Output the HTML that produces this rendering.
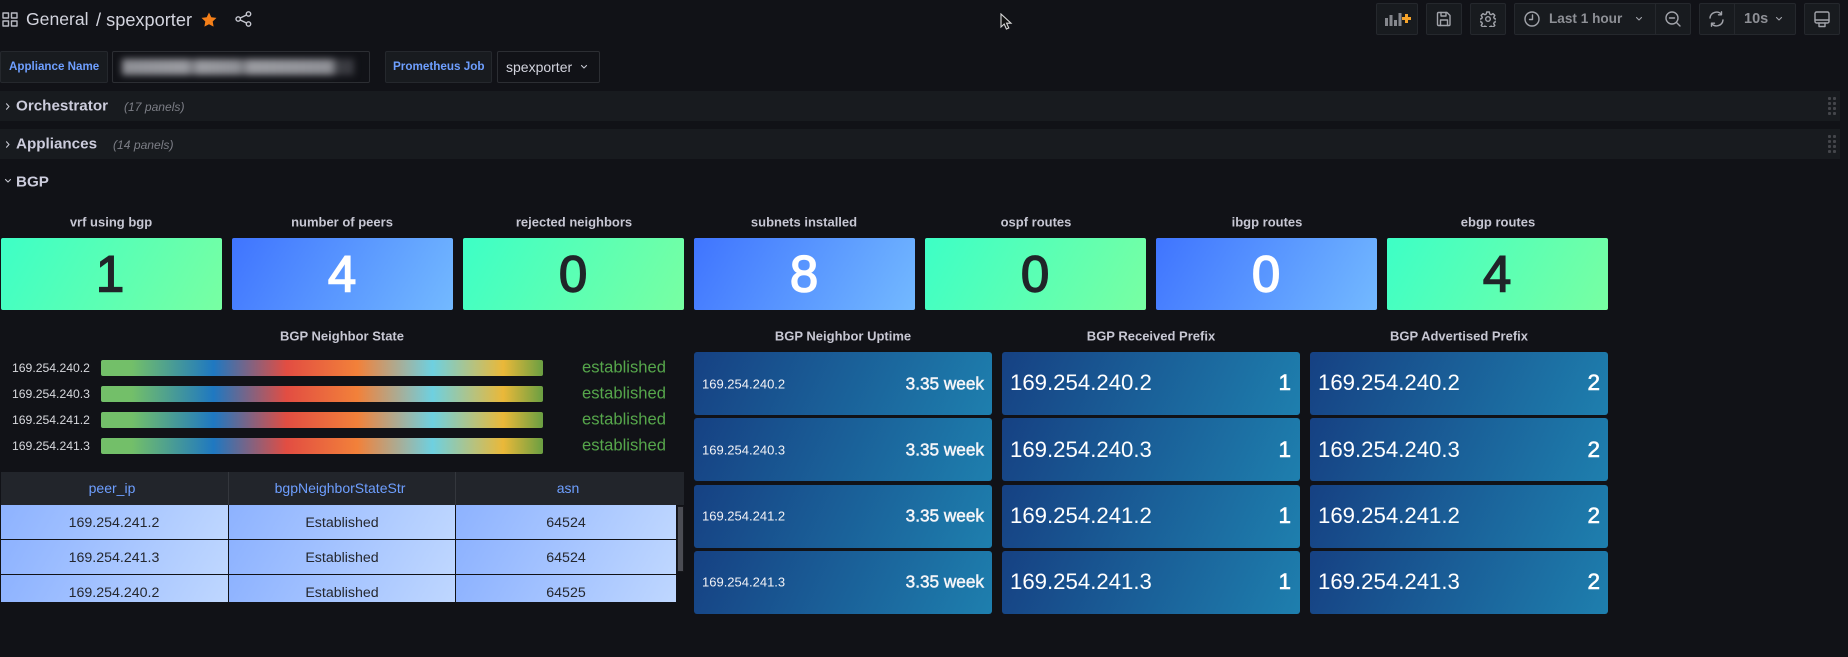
<!DOCTYPE html>
<html lang="en"><head><meta charset="utf-8"><title>spexporter</title>
<style>
html,body{margin:0;padding:0;background:#111217;}
#p{position:relative;width:1848px;height:657px;overflow:hidden;background:#111217;font-family:"Liberation Sans",sans-serif;color:#ccccdc;filter:blur(.35px);}
#p div,#p svg,#p span.a{position:absolute;}
.t{white-space:nowrap;line-height:1;transform:translateY(-50%);}
.c{white-space:nowrap;line-height:1;transform:translate(-50%,-50%);}
.btn{background:#181b1f;border:1px solid #25282d;border-radius:2px;box-sizing:border-box;top:3px;height:32px;}
.row{left:0;width:1840px;height:30px;background:#181b1f;}
.rt{font-size:15.2px;font-weight:700;color:#ccccdc;}
.pn{font-size:12.1px;font-style:italic;color:#7c7e86;}
.dots{width:9px;height:19px;left:1827px;background:radial-gradient(circle,#44464b 1.6px,transparent 1.7px) 0 0/5px 5px;}
.st{top:238px;width:221px;height:72px;border-radius:2px;}
.g{background:linear-gradient(120deg,#3dffc6,#78ffa2);}
.b{background:linear-gradient(120deg,#3f74ff,#73b9ff);}
.n{font-size:51px;font-weight:400;top:274px;-webkit-text-stroke:1.5px currentColor;}
.dk{color:#202429;}.wh{color:#fff;}
.ti{font-size:13px;font-weight:700;color:#c7c7d3;}
.bar{left:101px;width:442px;height:16px;border-radius:2px;background:linear-gradient(90deg,#73bf69 0,#73bf69 7%,#1f78c1 25.5%,#e24d42 42%,#f2813a 58%,#6ed0e0 75%,#eab839 91%,#6a9f42 100%);}
.bl{left:12px;font-size:12.2px;color:#d8d9de;}
.es{left:582px;font-size:16.6px;color:#56a64b;}
.th{top:472px;height:33px;background:#22252b;}
.tl{font-size:14px;color:#6e9fff;top:488px;}
.cl{height:34px;background:linear-gradient(120deg,#8db2ff,#bfd7ff);}
.td{font-size:14.2px;color:#24272e;}
.tile{width:298px;height:63px;border-radius:3px;background:linear-gradient(115deg,#164183,#1e7fae);}
.ul{font-size:13px;color:#f2f2f6;}
.uv{font-size:17.2px;font-weight:400;color:#f5f5f8;-webkit-text-stroke:.5px currentColor;}
.pl{font-size:22.2px;color:#fff;}
.pv{font-size:22.5px;font-weight:400;color:#fff;-webkit-text-stroke:.6px currentColor;}
.ico{fill:none;stroke:#a2a4ab;stroke-width:1.4;stroke-linecap:round;stroke-linejoin:round;}
.bt{font-size:13.6px;font-weight:700;color:#8e9096;}
</style></head><body><div id="p">

<svg class="ico" style="left:2px;top:12px;stroke:#b9bac3" width="16" height="15" viewBox="0 0 16 15"><rect x="1" y="1" width="5.5" height="5"/><rect x="9.5" y="1" width="5.5" height="5"/><rect x="1" y="9" width="5.5" height="5"/><rect x="9.5" y="9" width="5.5" height="5"/></svg>
<div class="t" style="left:26px;top:20px;font-size:17.6px;color:#d3d4de">General</div>
<div class="t" style="left:96px;top:20px;font-size:18.2px;color:#d3d4de">/ spexporter</div>
<svg style="left:201px;top:12px" width="16" height="15" viewBox="0 0 16 15"><path fill="#f47f19" d="M8 .5l2.3 4.7 5.2.7-3.8 3.6.9 5.1L8 12.2l-4.6 2.4.9-5.1L.5 5.9l5.2-.7z"/></svg>
<svg class="ico" style="left:235px;top:11px;stroke:#c6c7d0" width="17" height="16" viewBox="0 0 17 16"><circle cx="3.2" cy="8" r="2.2"/><circle cx="13.5" cy="3" r="2.2"/><circle cx="13.5" cy="13" r="2.2"/><path d="M5.2 7l6.3-3M5.2 9l6.3 3"/></svg>

<svg style="left:1000px;top:13px" width="13" height="18" viewBox="0 0 13 18"><path fill="#111" stroke="#d8d8d8" stroke-width="1.1" d="M1 1v13l3.2-3 2.2 5 2.4-1-2.2-4.8H11z"/></svg>

<div class="btn" style="left:1376px;width:42px"></div>
<svg style="left:1384px;top:12px" width="27" height="15" viewBox="0 0 27 15"><path fill="#85878d" d="M1 6h3v8H1zM5.5 3h3v11h-3zM10 8h3v6h-3zM14.5 1h3v13h-3z"/><path fill="#f5a32a" d="M18 5h3V2h3v3h3v3h-3v3h-3V8h-3z"/></svg>
<div class="btn" style="left:1426px;width:36px"></div>
<svg class="ico" style="left:1436px;top:11px" width="16" height="16" viewBox="0 0 16 16"><path d="M2.5 1.5h8.5l3 3v9a1 1 0 0 1-1 1h-10.500a1 1 0 0 1-1-1v-11a1 1 0 0 1 1-1z"/><path d="M5 1.500v3.500h5v-3.500M4.500 14.500v-5.500h7v5.500"/></svg>
<div class="btn" style="left:1470px;width:36px"></div>
<svg class="ico" style="left:1480px;top:11px" width="16" height="16" viewBox="0 0 16 16"><circle cx="8" cy="8" r="2.300"/><path d="M6.700 1h2.600l.4 2 1.500.700 1.800-1.100 1.800 1.800-1.100 1.800.7 1.500 2 .4v.0l0 2.600-2 .4-.7 1.500 1.100 1.800-1.800 1.800-1.800-1.100-1.500.7-.4 1.700h-2.600l-.4-1.700-1.500-.7-1.800 1.100-1.800-1.800 1.100-1.800-.7-1.500-2-.4v-2.600l2-.4.7-1.500-1.100-1.800 1.800-1.800 1.800 1.100 1.500-.7z"/></svg>
<div class="btn" style="left:1514px;width:177px"></div>
<div style="left:1655px;top:3px;width:1px;height:32px;background:#25282d"></div>
<svg class="ico" style="left:1524px;top:11px" width="16" height="16" viewBox="0 0 16 16"><circle cx="8" cy="8" r="7"/><path d="M8.500 4v4.500h-3"/></svg>
<div class="t bt" style="left:1549px;top:19px">Last 1 hour</div>
<svg class="ico" style="left:1635px;top:16px;stroke-width:1.1" width="8" height="6" viewBox="0 0 8 6"><path d="M1.500 1.500l2.500 2.500 2.500-2.500"/></svg>
<svg class="ico" style="left:1665px;top:11px" width="16" height="16" viewBox="0 0 16 16"><circle cx="7" cy="7" r="6"/><path d="M4.500 7h5M11.500 11.500l3.500 3.500"/></svg>
<div class="btn" style="left:1699px;width:97px"></div>
<div style="left:1734px;top:3px;width:1px;height:32px;background:#25282d"></div>
<svg class="ico" style="left:1708px;top:11px" width="17" height="16" viewBox="0 0 17 16"><path d="M2 7a6.500 6.500 0 0 1 11.500-3.500M15 9a6.500 6.500 0 0 1-11.500 3.500M13.500 .8v3h-3M3.500 15.200v-3h3"/></svg>
<div class="t bt" style="left:1744px;top:19px;font-size:14.500px">10s</div>
<svg class="ico" style="left:1775px;top:16px;stroke-width:1.1" width="8" height="6" viewBox="0 0 8 6"><path d="M1.500 1.500l2.500 2.500 2.500-2.500"/></svg>
<div class="btn" style="left:1804px;width:36px"></div>
<svg class="ico" style="left:1814px;top:11px" width="16" height="17" viewBox="0 0 16 17"><rect x="1" y="1" width="14" height="11" rx="1.500"/><path d="M1 9h14M5 12v3.500h6V12"/></svg>

<div style="left:0;top:51px;width:108px;height:32px;box-sizing:border-box;background:#181b1f;border:1px solid #25282d;border-radius:2px"></div>
<div class="t" style="left:9px;top:67px;font-size:11.6px;font-weight:700;color:#6e9fff">Appliance Name</div>
<div style="left:112px;top:51px;width:258px;height:32px;box-sizing:border-box;background:#111217;border:1px solid #2c2e33;border-radius:2px"></div>
<div style="left:122px;top:59px;width:232px;height:16px;filter:blur(3.5px);background:linear-gradient(90deg,#8d8e94 0,#9a9ba1 28%,#727379 30%,#9a9ba1 33%,#8f9096 50%,#727379 52%,#9a9ba1 55%,#8f9096 90%,#3a3b41 93%,#3a3b41 100%)"></div>
<div style="left:385px;top:51px;width:107px;height:32px;box-sizing:border-box;background:#181b1f;border:1px solid #25282d;border-radius:2px"></div>
<div class="t" style="left:393px;top:67px;font-size:11.7px;font-weight:700;color:#6e9fff">Prometheus Job</div>
<div style="left:497px;top:51px;width:103px;height:32px;box-sizing:border-box;background:#111217;border:1px solid #2c2e33;border-radius:2px"></div>
<div class="t" style="left:506px;top:67px;font-size:14px;color:#d3d4de">spexporter</div>
<svg class="ico" style="left:580px;top:64px;stroke:#c6c7d0;stroke-width:1.1" width="8" height="6" viewBox="0 0 8 6"><path d="M1.500 1.500l2.500 2.500 2.500-2.500"/></svg>

<div class="row" style="top:91px"></div>
<svg class="ico" style="left:5px;top:102px;stroke:#c6c7d0;stroke-width:1.1" width="6" height="9" viewBox="0 0 6 9"><path d="M1.500 1.800l2.500 2.700-2.500 2.700"/></svg>
<div class="t rt" style="left:16px;top:106px">Orchestrator</div>
<div class="t pn" style="left:124px;top:107px">(17 panels)</div>
<div class="dots" style="top:96px"></div>
<div class="row" style="top:129px"></div>
<svg class="ico" style="left:5px;top:140px;stroke:#c6c7d0;stroke-width:1.1" width="6" height="9" viewBox="0 0 6 9"><path d="M1.500 1.800l2.500 2.700-2.500 2.700"/></svg>
<div class="t rt" style="left:16px;top:144px">Appliances</div>
<div class="t pn" style="left:113px;top:145px">(14 panels)</div>
<div class="dots" style="top:134px"></div>
<svg class="ico" style="left:4px;top:178px;stroke:#c6c7d0;stroke-width:1.1" width="8" height="6" viewBox="0 0 8 6"><path d="M1.500 1.500l2.500 2.500 2.500-2.500"/></svg>
<div class="t rt" style="left:16px;top:182px">BGP</div>

<div class="c ti" style="left:111px;top:222px">vrf using bgp</div>
<div class="c ti" style="left:342px;top:222px">number of peers</div>
<div class="c ti" style="left:574px;top:222px">rejected neighbors</div>
<div class="c ti" style="left:804px;top:222px">subnets installed</div>
<div class="c ti" style="left:1036px;top:222px">ospf routes</div>
<div class="c ti" style="left:1267px;top:222px">ibgp routes</div>
<div class="c ti" style="left:1498px;top:222px">ebgp routes</div>

<div class="st g" style="left:1px"></div><div class="c n dk" style="left:110px">1</div>
<div class="st b" style="left:232px"></div><div class="c n wh" style="left:342px">4</div>
<div class="st g" style="left:463px"></div><div class="c n dk" style="left:573px">0</div>
<div class="st b" style="left:694px"></div><div class="c n wh" style="left:804px">8</div>
<div class="st g" style="left:925px"></div><div class="c n dk" style="left:1035px">0</div>
<div class="st b" style="left:1156px"></div><div class="c n wh" style="left:1266px">0</div>
<div class="st g" style="left:1387px"></div><div class="c n dk" style="left:1497px">4</div>

<div class="c ti" style="left:342px;top:336px">BGP Neighbor State</div>
<div class="c ti" style="left:843px;top:336px">BGP Neighbor Uptime</div>
<div class="c ti" style="left:1151px;top:336px">BGP Received Prefix</div>
<div class="c ti" style="left:1459px;top:336px">BGP Advertised Prefix</div>

<div class="t bl" style="top:368px">169.254.240.2</div><div class="bar" style="top:360px"></div><div class="t es" style="top:368px">established</div>
<div class="t bl" style="top:394px">169.254.240.3</div><div class="bar" style="top:386px"></div><div class="t es" style="top:394px">established</div>
<div class="t bl" style="top:420px">169.254.241.2</div><div class="bar" style="top:412px"></div><div class="t es" style="top:420px">established</div>
<div class="t bl" style="top:446px">169.254.241.3</div><div class="bar" style="top:438px"></div><div class="t es" style="top:446px">established</div>

<div class="th" style="left:1px;width:683px"></div>
<div style="left:228px;top:472px;width:1px;height:33px;background:#34373d"></div>
<div style="left:455px;top:472px;width:1px;height:33px;background:#34373d"></div>
<div class="c tl" style="left:112px">peer_ip</div>
<div class="c tl" style="left:340px">bgpNeighborStateStr</div>
<div class="c tl" style="left:568px">asn</div>

<div class="cl" style="left:1px;top:505px;width:227px"></div><div class="cl" style="left:229px;top:505px;width:226px"></div><div class="cl" style="left:456px;top:505px;width:220px"></div>
<div class="c td" style="left:114px;top:523px">169.254.241.2</div><div class="c td" style="left:342px;top:523px">Established</div><div class="c td" style="left:566px;top:523px">64524</div>
<div class="cl" style="left:1px;top:540px;width:227px"></div><div class="cl" style="left:229px;top:540px;width:226px"></div><div class="cl" style="left:456px;top:540px;width:220px"></div>
<div class="c td" style="left:114px;top:558px">169.254.241.3</div><div class="c td" style="left:342px;top:558px">Established</div><div class="c td" style="left:566px;top:558px">64524</div>
<div class="cl" style="left:1px;top:575px;width:227px;height:27px"></div><div class="cl" style="left:229px;top:575px;width:226px;height:27px"></div><div class="cl" style="left:456px;top:575px;width:220px;height:27px"></div>
<div style="left:1px;top:575px;width:675px;height:27px;overflow:hidden">
<div class="c td" style="left:113px;top:18px">169.254.240.2</div><div class="c td" style="left:341px;top:18px">Established</div><div class="c td" style="left:565px;top:18px">64525</div>
</div>
<div style="left:677px;top:506px;width:7px;height:66px;box-sizing:border-box;background:#4b4c53;border:1px solid #16171b"></div>

<div class="tile" style="left:694px;top:352px"></div><div class="t ul" style="left:702px;top:384px">169.254.240.2</div><div class="t uv" style="right:864px;top:384px">3.35 week</div>
<div class="tile" style="left:694px;top:418px"></div><div class="t ul" style="left:702px;top:450px">169.254.240.3</div><div class="t uv" style="right:864px;top:450px">3.35 week</div>
<div class="tile" style="left:694px;top:485px"></div><div class="t ul" style="left:702px;top:516px">169.254.241.2</div><div class="t uv" style="right:864px;top:516px">3.35 week</div>
<div class="tile" style="left:694px;top:551px"></div><div class="t ul" style="left:702px;top:582px">169.254.241.3</div><div class="t uv" style="right:864px;top:582px">3.35 week</div>

<div class="tile" style="left:1002px;top:352px"></div><div class="t pl" style="left:1010px;top:383px">169.254.240.2</div><div class="t pv" style="right:557px;top:383px">1</div>
<div class="tile" style="left:1002px;top:418px"></div><div class="t pl" style="left:1010px;top:450px">169.254.240.3</div><div class="t pv" style="right:557px;top:450px">1</div>
<div class="tile" style="left:1002px;top:485px"></div><div class="t pl" style="left:1010px;top:516px">169.254.241.2</div><div class="t pv" style="right:557px;top:516px">1</div>
<div class="tile" style="left:1002px;top:551px"></div><div class="t pl" style="left:1010px;top:582px">169.254.241.3</div><div class="t pv" style="right:557px;top:582px">1</div>

<div class="tile" style="left:1310px;top:352px"></div><div class="t pl" style="left:1318px;top:383px">169.254.240.2</div><div class="t pv" style="right:248px;top:383px">2</div>
<div class="tile" style="left:1310px;top:418px"></div><div class="t pl" style="left:1318px;top:450px">169.254.240.3</div><div class="t pv" style="right:248px;top:450px">2</div>
<div class="tile" style="left:1310px;top:485px"></div><div class="t pl" style="left:1318px;top:516px">169.254.241.2</div><div class="t pv" style="right:248px;top:516px">2</div>
<div class="tile" style="left:1310px;top:551px"></div><div class="t pl" style="left:1318px;top:582px">169.254.241.3</div><div class="t pv" style="right:248px;top:582px">2</div>

</div></body></html>
